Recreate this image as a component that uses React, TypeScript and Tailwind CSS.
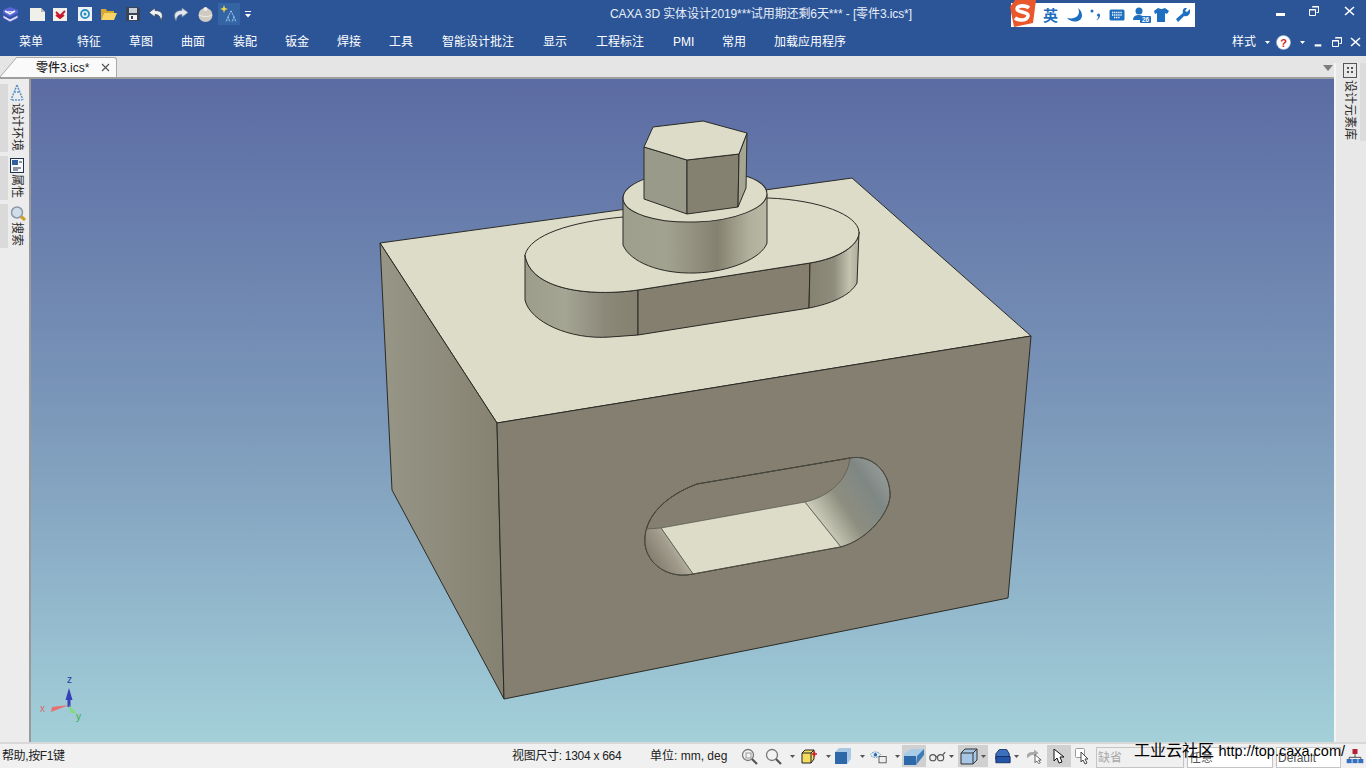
import React from "react";

const menuItems = [
  { label: "特征", w: "w-[24px]" },
  { label: "草图", w: "w-[24px]" },
  { label: "曲面", w: "w-[24px]" },
  { label: "装配", w: "w-[24px]" },
  { label: "钣金", w: "w-[24px]" },
  { label: "焊接", w: "w-[24px]" },
  { label: "工具", w: "w-[25px]" },
  { label: "智能设计批注", w: "w-[73px]" },
  { label: "显示", w: "w-[25px]" },
  { label: "工程标注", w: "w-[49px]" },
  { label: "PMI", w: "w-[21px]" },
  { label: "常用", w: "w-[24px]" },
  { label: "加载应用程序", w: "w-[72px]" },
];

function Caret({ color = "#fff" }: { color?: string }) {
  return (
    <svg width="7" height="5" viewBox="0 0 7 5">
      <path d="M1 1h5L3.500 4z" fill={color} />
    </svg>
  );
}

// quick access toolbar
function QuickBar() {
  return (
    <div className="flex items-center h-full pl-[2px]">
      <svg width="17" height="17" viewBox="0 0 17 17" className="mt-[1px]">
        <path d="M1 4l7-3 8 3v3l-8 4-7-4z" fill="#5a66d8" />
        <path d="M3 5l5 2 5-2M1 9l7 4 8-4v3l-8 4-7-4z" fill="#d9defa" stroke="#3c46b8" strokeWidth="0.8" />
        <path d="M3 5l5 3 5-3" fill="none" stroke="#fff" strokeWidth="1.500" />
      </svg>
      <svg width="16" height="14" viewBox="0 0 16 14" className="ml-[11px]">
        <path d="M0 1h11l4 4v9H0z" fill="#f0f0ea" />
        <path d="M11 1l4 4h-4z" fill="#b8b8b0" />
      </svg>
      <svg width="14" height="14" viewBox="0 0 14 14" className="ml-[7px]">
        <rect width="14" height="13" y="1" fill="#f3f0ea" />
        <path d="M3 5l4 4 5-5M3 8l4 3 4-3" fill="none" stroke="#c4172c" strokeWidth="1.800" />
      </svg>
      <svg width="14" height="14" viewBox="0 0 14 14" className="ml-[11px]">
        <rect width="14" height="14" fill="#eef2f4" />
        <circle cx="7" cy="7" r="4" fill="none" stroke="#2a8fc4" strokeWidth="1.800" />
        <circle cx="7" cy="7" r="1.500" fill="#2a8fc4" />
      </svg>
      <svg width="16" height="12" viewBox="0 0 16 12" className="ml-[9px]">
        <path d="M0 1h5l1 2h7v2H3L0 12z" fill="#d8a92e" />
        <path d="M3 5h13l-3 7H0z" fill="#f7d465" />
      </svg>
      <svg width="14" height="14" viewBox="0 0 14 14" className="ml-[9px]">
        <path d="M0 0h12l2 2v12H0z" fill="#3a4458" />
        <rect x="3" y="1" width="8" height="5" fill="#c9ced6" />
        <rect x="3" y="8" width="8" height="5" fill="#f4f4f4" />
        <rect x="5" y="9" width="2" height="3" fill="#3a4458" />
      </svg>
      <svg width="15" height="13" viewBox="0 0 15 13" className="ml-[9px]">
        <path d="M6 0L0 4.500 6 9V6.500c4 0 5 2 6 6 3-6 1-10-6-10z" fill="#eef1f4" stroke="#39424f" strokeWidth="0.7" />
      </svg>
      <svg width="15" height="13" viewBox="0 0 15 13" className="ml-[9px]">
        <path d="M9 0l6 4.500L9 9V6.500c-4 0-5 2-6 6C0 6.500 2 2.500 9 2.500z" fill="#e4e8ee" stroke="#7f8ba2" strokeWidth="0.7" />
      </svg>
      <svg width="15" height="16" viewBox="0 0 15 16" className="ml-[10px]">
        <circle cx="7.500" cy="9" r="7" fill="#cfcbc2" />
        <circle cx="7.500" cy="3" r="2" fill="#f2efe9" />
        <path d="M1 9c3 2 10 2 13 0" stroke="#f4f1ec" fill="none" />
      </svg>
      <div className="ml-[5px] w-[22px] h-[22px] bg-[#3564a4] flex items-center justify-center">
        <svg width="18" height="18" viewBox="0 0 18 18">
          <path d="M4 0l1 3 3 1-3 1-1 3-1-3-3-1 3-1z" fill="#f0d84a" />
          <path d="M11 6l-3 6M11 6l3 6M8 12l-2 5M8 12l2 5M14 12l-2 5M14 12l2 5" stroke="#9cc8ec" strokeWidth="1.200" strokeDasharray="1.500 1" />
        </svg>
      </div>
      <svg width="6" height="7" viewBox="0 0 6 7" className="ml-[5px]">
        <path d="M0 0h6v1H0zM0 3h6L3 6.500z" fill="#fff" />
      </svg>
    </div>
  );
}

function WindowButtons({ small }: { small?: boolean }) {
  return (
    <div className={small ? "flex items-center gap-[8px]" : "flex items-center gap-[22px]"}>
      <svg width="11" height="11" viewBox="0 0 11 11" className={small ? "w-[8px]" : ""}>
        <rect x="1" y="8" width="9" height="3" fill="#fff" />
      </svg>
      <svg width="10" height="10" viewBox="0 0 10 10" className={small ? "ml-[2px]" : "ml-[1px]"}>
        <path d="M3.500 .5h6v6h-2M.5 3.500h6v6h-6z" fill="none" stroke="#fff" />
        <path d="M3 1h7M0 4h7" stroke="#fff" />
      </svg>
      <svg width="11" height="10" viewBox="0 0 11 10" className={small ? "" : "ml-[3px]"}>
        <path d="M1 1l9 8M10 1L1 9" stroke="#fff" strokeWidth="1.600" />
      </svg>
    </div>
  );
}

function SogouBar() {
  return (
    <div className="absolute left-[1011px] top-[3px] w-[184px] h-[24px] bg-white flex items-center pl-[32px] text-[#1f6fc0]">
      <svg width="26" height="27" viewBox="0 0 26 27" className="absolute -left-[1px] -top-[3px]">
        <path d="M5 0h21l-3 23-19 4L0 7z" fill="#e9572b" />
        <path d="M19 8c-3-3-12-3-12 1s12 2 11 7-9 5-13 2" fill="none" stroke="#fff" strokeWidth="3.600" />
      </svg>
      <span className="text-[15px] font-bold leading-none w-[23px]">英</span>
      <svg width="16" height="14" viewBox="0 0 16 14" className="ml-[1px]">
        <path d="M11 0c3 6-1 12-11 10 4 5 14 5 15-2 0-3-1-6-4-8z" fill="#1f6fc0" />
      </svg>
      <svg width="12" height="14" viewBox="0 0 12 14" className="ml-[6px]">
        <circle cx="3" cy="3" r="1.500" fill="#1f6fc0" />
        <path d="M9 7c1 2 0 4-2 5 3 0 4-3 4-5z" fill="#1f6fc0" />
        <circle cx="9.500" cy="7" r="1.500" fill="#1f6fc0" />
      </svg>
      <svg width="16" height="12" viewBox="0 0 16 12" className="ml-[8px]">
        <rect x=".5" y=".5" width="15" height="11" rx="1.500" fill="#1f6fc0" />
        <path d="M3 3.500h10M3 6h10M5 8.500h6" stroke="#fff" strokeWidth="1.500" strokeDasharray="1.300 .8" />
      </svg>
      <svg width="18" height="16" viewBox="0 0 18 16" className="ml-[8px]">
        <circle cx="6" cy="4" r="3.500" fill="#1f6fc0" />
        <path d="M0 13c0-4 3-5 6-5s4 1 4 2v3z" fill="#1f6fc0" />
        <rect x="7" y="9" width="11" height="7" rx="1" fill="#1f6fc0" />
        <text x="12.500" y="15" textAnchor="middle" fontSize="6.500" fontWeight="700" fill="#fff" fontFamily="Liberation Sans, sans-serif">26</text>
      </svg>
      <svg width="15" height="14" viewBox="0 0 15 14" className="ml-[3px]">
        <path d="M4 0l3 1 1 0 3-1 4 3-2 3-2-1v9H3V5L1 6 0 3z" fill="#1f6fc0" />
      </svg>
      <svg width="15" height="14" viewBox="0 0 15 14" className="ml-[7px]">
        <path d="M14 1l-3 3-2-1 2-3c-3-1-5 2-4 5L0 11l2 3 6-6c3 1 6-1 6-4z" fill="#1f6fc0" />
      </svg>
    </div>
  );
}

function RailSection({ children, className }: { children: React.ReactNode; className: string }) {
  return (
    <div className={`border-l-[8px] border-[#dadada] w-[26px] flex flex-col items-center ${className}`}>
      {children}
    </div>
  );
}

function LeftRail() {
  return (
    <aside className="w-[31px] shrink-0 bg-[#ececec] border-r-[2px] border-[#9a9a9a] pt-[5px] text-[#2b2b2b] text-[12px]">
      <RailSection className="h-[68px]">
        <svg width="14" height="17" viewBox="0 0 14 17" className="shrink-0 mb-[2px]">
          <path d="M7 1L1 16M7 1l6 15M2 16h10M4 8h6" stroke="#5d94cc" strokeWidth="1.500" strokeDasharray="2 1" fill="none" />
        </svg>
        <span className="[writing-mode:vertical-rl] [text-orientation:sideways] leading-[14px]">设计环境</span>
      </RailSection>
      <RailSection className="h-[44px] mt-[4px]">
        <svg width="14" height="15" viewBox="0 0 14 15" className="mt-[2px] shrink-0 mb-[1px]">
          <rect x=".5" y=".5" width="13" height="14" fill="#f8f8f8" stroke="#1f3350" />
          <rect x="2" y="2" width="6" height="5" fill="#2f5f9e" />
          <path d="M9 4h3M3 10h8M3 12h5" stroke="#1f3350" />
        </svg>
        <span className="[writing-mode:vertical-rl] [text-orientation:sideways] leading-[14px]">属性</span>
      </RailSection>
      <RailSection className="h-[44px] mt-[4px]">
        <svg width="17" height="16" viewBox="0 0 17 16" className="ml-[3px] mt-[2px] shrink-0">
          <circle cx="7" cy="6.500" r="5.500" fill="#cfdde8" stroke="#8b98a8" strokeWidth="1.500" />
          <path d="M11 10.500l4 3.500" stroke="#cf9f24" strokeWidth="3" />
        </svg>
        <span className="[writing-mode:vertical-rl] [text-orientation:sideways] leading-[14px]">搜索</span>
      </RailSection>
    </aside>
  );
}

function RightRail() {
  return (
    <aside className="w-[32px] shrink-0 bg-[#e8e8e8] border-l-[2px] border-[#f4f4f4] -mt-[16px] pl-[6px] text-[#2b2b2b] text-[12px] relative">
      <div className="absolute right-0 top-0 w-[6px] h-[78px] bg-[#dcdcdc]" />
      <div className="flex flex-col items-center w-[16px]">
        <svg width="14" height="15" viewBox="0 0 14 15">
          <rect x=".5" y=".5" width="13" height="14" fill="none" stroke="#555" />
          <path d="M4 4h2v2H4zM8 4h2v2H8zM4 8h2v2H4zM8 8h2v2H8z" fill="#555" />
        </svg>
        <span className="[writing-mode:vertical-rl] [text-orientation:sideways] leading-[14px] mt-[2px]">设计元素库</span>
      </div>
    </aside>
  );
}

// the part drawn in the viewport, in screen coordinates
function Model() {
  return (
    <svg viewBox="31 79 1303 663" className="absolute inset-0 w-full h-full">
      <defs>
        <linearGradient id="slotLeft" gradientUnits="userSpaceOnUse" x1="525" y1="0" x2="640" y2="0">
          <stop offset="0" stopColor="#9d9d8c" />
          <stop offset="0.35" stopColor="#a5a594" />
          <stop offset="0.7" stopColor="#8b8879" />
          <stop offset="1" stopColor="#858170" />
        </linearGradient>
        <linearGradient id="slotRight" gradientUnits="userSpaceOnUse" x1="808" y1="0" x2="860" y2="0">
          <stop offset="0" stopColor="#858170" />
          <stop offset="0.5" stopColor="#8e8c7c" />
          <stop offset="0.8" stopColor="#c3c3b0" />
          <stop offset="1" stopColor="#a9a998" />
        </linearGradient>
        <linearGradient id="cyl" gradientUnits="userSpaceOnUse" x1="623" y1="0" x2="768" y2="0">
          <stop offset="0" stopColor="#9f9f8e" />
          <stop offset="0.3" stopColor="#a2a291" />
          <stop offset="0.65" stopColor="#858170" />
          <stop offset="0.87" stopColor="#b0b09d" />
          <stop offset="1" stopColor="#b8b8a5" />
        </linearGradient>
        <linearGradient id="leftFace" gradientUnits="userSpaceOnUse" x1="385" y1="0" x2="500" y2="0">
          <stop offset="0" stopColor="#969586" />
          <stop offset="1" stopColor="#868272" />
        </linearGradient>
        <linearGradient id="holeRight" gradientUnits="userSpaceOnUse" x1="810" y1="520" x2="885" y2="470">
          <stop offset="0" stopColor="#dcdcc9" />
          <stop offset="0.4" stopColor="#8e8e80" />
          <stop offset="0.75" stopColor="#7f8784" />
          <stop offset="1" stopColor="#969c98" />
        </linearGradient>
        <linearGradient id="holeLeft" gradientUnits="userSpaceOnUse" x1="650" y1="560" x2="690" y2="535">
          <stop offset="0" stopColor="#837c6e" />
          <stop offset="0.45" stopColor="#a09b8c" />
          <stop offset="1" stopColor="#dfdfcc" />
        </linearGradient>
      </defs>

      <g stroke="#2b2b26" strokeWidth="1" strokeLinejoin="round">
        <path d="M380 243L852 178L1031 336L497 423Z" fill="#dcdcc9" />
        <path d="M380 243L497 423L504 699L392 490Z" fill="url(#leftFace)" />
        <path d="M497 423L1031 336L1008 598L504 699Z" fill="#847f70" />

        {/* slot in the front face */}
        <path d="M645 538C646 516 665 496 697 484L850 458C872 454 890 472 890 495C890 512 868 540 840 547L693 574C665 580 643 560 645 538Z" fill="#847f70" />
        <path d="M661 528L805 502L841 547L693 574Z" fill="#dddcc9" strokeWidth="0.7" stroke="#55544a" />
        <path d="M805 502C828 497 848 480 850 458C872 454 890 472 890 495C890 512 868 540 841 547Z" fill="url(#holeRight)" strokeWidth="0.7" stroke="#55544a" />
        <path d="M646 529L661 528L693 574C665 580 643 560 645 538Z" fill="url(#holeLeft)" strokeWidth="0.7" stroke="#55544a" />
        <path d="M645 538C646 516 665 496 697 484L850 458C872 454 890 472 890 495C890 512 868 540 840 547L693 574C665 580 643 560 645 538Z" fill="none" strokeWidth="1" stroke="#4c4a40" />

        {/* raised slot */}
        <path d="M525 255L525 300C530 320 570 340 610 337L638 335L809 308L857 283L859 230L810 263L638 290Z" fill="#858170" stroke="none" />
        <path d="M525 255L525 300C530 322 570 340 610 337L638 335L638 290C590 297 530 290 525 255Z" fill="url(#slotLeft)" />
        <path d="M638 290L810 263L809 308L638 335Z" fill="#857f70" />
        <path d="M810 263C840 258 858 246 859 232L857 283C850 296 830 304 809 308Z" fill="url(#slotRight)" />
        <path d="M525 255C530 235 570 222 623 217L768 198C820 200 858 215 859 232C859 245 840 258 810 263L638 290C590 297 530 290 525 255Z" fill="#dcdcc9" />

        {/* cylinder */}
        <path d="M623 197L623 245C630 262 660 274 695 273C730 272 762 258 767 243L767 194Z" fill="url(#cyl)" />
        <ellipse cx="695" cy="196" rx="72" ry="26" fill="#dcdcc9" transform="rotate(-2 695 196)" />

        {/* hex head */}
        <path d="M644 147L687 160L687 214L644 199Z" fill="#9a9a8a" />
        <path d="M687 160L739 154L738 207L687 214Z" fill="#858170" />
        <path d="M739 154L747 133L746 188L738 207Z" fill="#a5a594" />
        <path d="M644 147L653 127L703 121L747 133L739 154L687 160Z" fill="#dcdcc9" />
      </g>

      {/* triad */}
      <g>
        <path d="M69 688l-3.500 12h2l0 7h3l0-7h2z" fill="#3640b8" />
        <path d="M69 705L51 712l1-5z" fill="#e87070" />
        <path d="M69 705l7 8-5 0z" fill="#7fe070" />
        <text x="67" y="683" fontSize="10" fill="#2a3aa8" fontFamily="Liberation Sans, sans-serif">z</text>
        <text x="40" y="712" fontSize="10" fill="#d86a6a" fontFamily="Liberation Sans, sans-serif">x</text>
        <text x="76" y="720" fontSize="10" fill="#35b040" fontFamily="Liberation Sans, sans-serif">y</text>
      </g>
    </svg>
  );
}

function StatusIcons() {
  return (
    <div className="flex items-center h-full absolute left-[741px] top-0">
      <svg width="17" height="17" viewBox="0 0 17 17">
        <circle cx="7" cy="7" r="5.500" fill="#f3f3f3" stroke="#777" strokeWidth="1.300" />
        <rect x="5" y="5" width="5" height="5" fill="none" stroke="#999" />
        <path d="M11 11l5 5" stroke="#555" strokeWidth="2.200" />
      </svg>
      <svg width="17" height="17" viewBox="0 0 17 17" className="ml-[7px]">
        <circle cx="7" cy="7" r="5.500" fill="#f3f3f3" stroke="#777" strokeWidth="1.300" />
        <path d="M11 11l5 5" stroke="#555" strokeWidth="2.200" />
      </svg>
      <span className="ml-[7px]"><Caret color="#555" /></span>
      <svg width="16" height="15" viewBox="0 0 16 15" className="ml-[5px]">
        <path d="M1 4h9v10H1zM1 4l3-3h9l-3 3M10 4l3-3v9l-3 4" fill="#f4dc63" stroke="#222" />
        <path d="M11 5h5M13.500 2.500v5" stroke="#d8182a" strokeWidth="1.400" />
      </svg>
      <span className="ml-[8px]"><Caret color="#555" /></span>
      <svg width="16" height="16" viewBox="0 0 16 16" className="ml-[3px]">
        <path d="M4 0h12v11l-4 5H0V4z" fill="#a9c8e4" />
        <path d="M0 4h12v12H0z" fill="#2d69a8" />
      </svg>
      <span className="ml-[8px]"><Caret color="#555" /></span>
      <svg width="18" height="15" viewBox="0 0 20 16" className="ml-[4px]">
        <path d="M0 6c3-4 9-4 12 0-3 4-9 4-12 0z" fill="none" stroke="#4d8fc9" strokeDasharray="2 1" />
        <circle cx="6" cy="6" r="2" fill="#2a6fb0" />
        <rect x="10" y="8" width="8" height="7" fill="#eee" stroke="#555" />
      </svg>
      <span className="ml-[6px]"><Caret color="#555" /></span>
      <div className="ml-[1px] w-[24px] h-[22px] bg-[#d0d0d0] flex items-center justify-center">
        <svg width="20" height="17" viewBox="0 0 20 17">
          <path d="M0 6L7 1h13L13 8H0z" fill="#a8cce8" />
          <path d="M0 8h12v9H0z" fill="#2d69a8" />
          <path d="M13 8l7-7v6l-8 10z" fill="#3d7cba" />
        </svg>
      </div>
      <svg width="17" height="11" viewBox="0 0 22 13" className="ml-[3px]">
        <circle cx="5" cy="8" r="4" fill="none" stroke="#555" strokeWidth="1.500" />
        <circle cx="15" cy="8" r="4" fill="none" stroke="#555" strokeWidth="1.500" />
        <path d="M9 7h2M18 4l3-3" stroke="#555" strokeWidth="1.500" />
      </svg>
      <span className="ml-[2px]"><Caret color="#555" /></span>
      <div className="ml-[3px] w-[30px] h-[22px] bg-[#d0d0d0] flex items-center pl-[2px] gap-[2px]">
        <svg width="18" height="17" viewBox="0 0 18 17">
          <path d="M1 5h12v11H1zM1 5l4-4h12l-4 4M13 5l4-4v11l-4 4" fill="#a8c6e6" stroke="#333" />
        </svg>
        <Caret color="#555" />
      </div>
      <svg width="16" height="15" viewBox="0 0 18 16" className="ml-[7px]">
        <path d="M5 0h8l3 5v6H1V5z" fill="#3b71bc" stroke="#12285c" />
        <path d="M1 8h16v7H1z" fill="#2255a8" stroke="#12285c" />
      </svg>
      <span className="ml-[2px]"><Caret color="#555" /></span>
      <svg width="16" height="15" viewBox="0 0 18 16" className="ml-[7px]">
        <path d="M0 6c2-3 5-3 8-3V0l5 4-5 4V6C5 6 3 7 0 10z" fill="#a8a8a8" />
        <path d="M9 6l0 9 2-2 2 3 2-1-2-3h3z" fill="#fff" stroke="#555" />
      </svg>
      <div className="ml-[4px] w-[24px] h-[22px] bg-[#d0d0d0] flex items-center justify-center">
        <svg width="13" height="15" viewBox="0 0 13 15">
          <path d="M1 0v12l3-3 2 5 3-1-2-5h4z" fill="#fff" stroke="#111" />
        </svg>
      </div>
      <svg width="17" height="17" viewBox="0 0 17 17" className="ml-[4px]">
        <rect x=".5" y=".5" width="9" height="9" rx="1" fill="#fff" stroke="#999" />
        <path d="M6 4v10l2-2 2 4 2-1-2-4h3z" fill="#fff" stroke="#444" />
      </svg>
    </div>
  );
}

export default function App() {
  return (
    <div className="relative w-[1366px] h-[768px] overflow-hidden flex flex-col bg-[#e8e8e8] font-['Liberation_Sans','Noto_Sans_CJK_SC',sans-serif]">
      {/* title bar */}
      <header className="h-[28px] shrink-0 bg-[#2b5597] relative text-white">
        <QuickBar />
        <div className="absolute left-[610px] top-[6px] text-[12px] leading-[16px] whitespace-nowrap text-[#e8eef8] tracking-[-0.1px]">
          CAXA 3D 实体设计2019***试用期还剩6天*** - [零件3.ics*]
        </div>
        <div className="absolute right-[11px] top-[5px]">
          <WindowButtons />
        </div>
      </header>

      {/* menu bar */}
      <nav className="h-[28px] shrink-0 bg-[#2b5597] flex items-center pl-[19px] text-[12px] text-white relative">
        <span className="w-[24px] mr-[34px] whitespace-nowrap">菜单</span>
        <div className="flex items-center gap-[28px]">
          {menuItems.map((m) => (
            <span key={m.label} className={`${m.w} whitespace-nowrap`}>
              {m.label}
            </span>
          ))}
        </div>
        <div className="absolute right-[5px] top-0 h-full flex items-center">
          <span className="mr-[8px]">样式</span>
          <Caret />
          <svg width="15" height="15" viewBox="0 0 15 15" className="ml-[5px]">
            <circle cx="7.500" cy="7.500" r="7" fill="#fff" stroke="#9bb2d4" strokeDasharray="2 1" />
            <text x="7.500" y="11.500" textAnchor="middle" fontSize="11" fontWeight="700" fill="#d01c2c" fontFamily="Liberation Sans, sans-serif">?</text>
          </svg>
          <span className="ml-[8px] mr-[8px]"><Caret /></span>
          <WindowButtons small />
        </div>
      </nav>

      {/* document tab strip */}
      <div className="h-[23px] shrink-0 bg-[#e5e5e5] border-b-[2px] border-[#9e9e9e] flex items-end pl-[16px] relative">
        <svg width="17" height="21" viewBox="0 0 17 21" className="absolute left-0 bottom-0">
          <path d="M0 21L17 1V21z" fill="#fafafa" />
          <path d="M0 21L17 1" stroke="#aaa" fill="none" />
        </svg>
        <div className="h-[20px] w-[101px] bg-[#fafafa] border-t border-r border-[#aaa] rounded-tr-[3px] flex items-center text-[12px] font-medium text-[#222] pl-[20px] whitespace-nowrap">
          零件3.ics*
          <svg width="9" height="9" viewBox="0 0 9 9" className="ml-[12px]">
            <path d="M1 1l7 7M8 1L1 8" stroke="#555" strokeWidth="1.200" />
          </svg>
        </div>
        <div className="ml-auto mr-[33px] mb-[6px]">
          <svg width="10" height="6" viewBox="0 0 10 6"><path d="M0 0h10L5 6z" fill="#7d7d7d" /></svg>
        </div>
      </div>

      {/* workspace */}
      <main className="flex-1 flex min-h-0">
        <LeftRail />
        <div className="flex-1 relative bg-gradient-to-b from-[#5b6ba3] via-[#7b97b9] to-[#a3d0d9]">
          <Model />
        </div>
        <RightRail />
      </main>

      {/* status bar */}
      <footer className="h-[26px] shrink-0 bg-[#f0f0f0] border-t-[2px] border-[#d8d8d8] relative text-[12px] text-[#222] flex items-center">
        <span className="absolute left-[2px] whitespace-nowrap tracking-[-0.4px]">帮助,按F1键</span>
        <span className="absolute left-[512px] whitespace-nowrap tracking-[-0.3px]">视图尺寸: 1304 x 664</span>
        <span className="absolute left-[650px] whitespace-nowrap">单位: mm, deg</span>
        <StatusIcons />
        <div className="absolute left-[1096px] top-[3px] w-[88px] h-[21px] border border-[#c4c4c4] bg-[#f0f0f0] text-[#a8a8a8] pl-[1px] leading-[20px]">缺省</div>
        <div className="absolute left-[1187px] top-[3px] w-[86px] h-[21px] border border-[#c4c4c4] bg-white text-[#555] pl-[1px] leading-[20px]">任意</div>
        <div className="absolute left-[1276px] top-[3px] w-[65px] h-[21px] border border-[#c4c4c4] bg-white text-[#555] pl-[1px] leading-[20px]">Default</div>
        <svg width="20" height="15" viewBox="0 0 20 18" className="absolute left-[1345px] top-[5px]">
          <rect x="7" y="0" width="6" height="6" fill="#b8203a" />
          <path d="M10 6v4M3 13v-3h14v3" stroke="#333" fill="none" />
          <rect x="0" y="12" width="6" height="5" fill="#3570c0" />
          <rect x="7" y="12" width="6" height="5" fill="#3570c0" />
          <rect x="14" y="12" width="6" height="5" fill="#3570c0" />
        </svg>
      </footer>

      <SogouBar />
      {/* site watermark */}
      <div className="absolute left-[1134px] top-[741px] text-[16px] leading-[20px] text-black whitespace-nowrap">
        工业云社区 <span className="text-[14.5px]">http://top.caxa.com/</span>
      </div>
    </div>
  );
}
